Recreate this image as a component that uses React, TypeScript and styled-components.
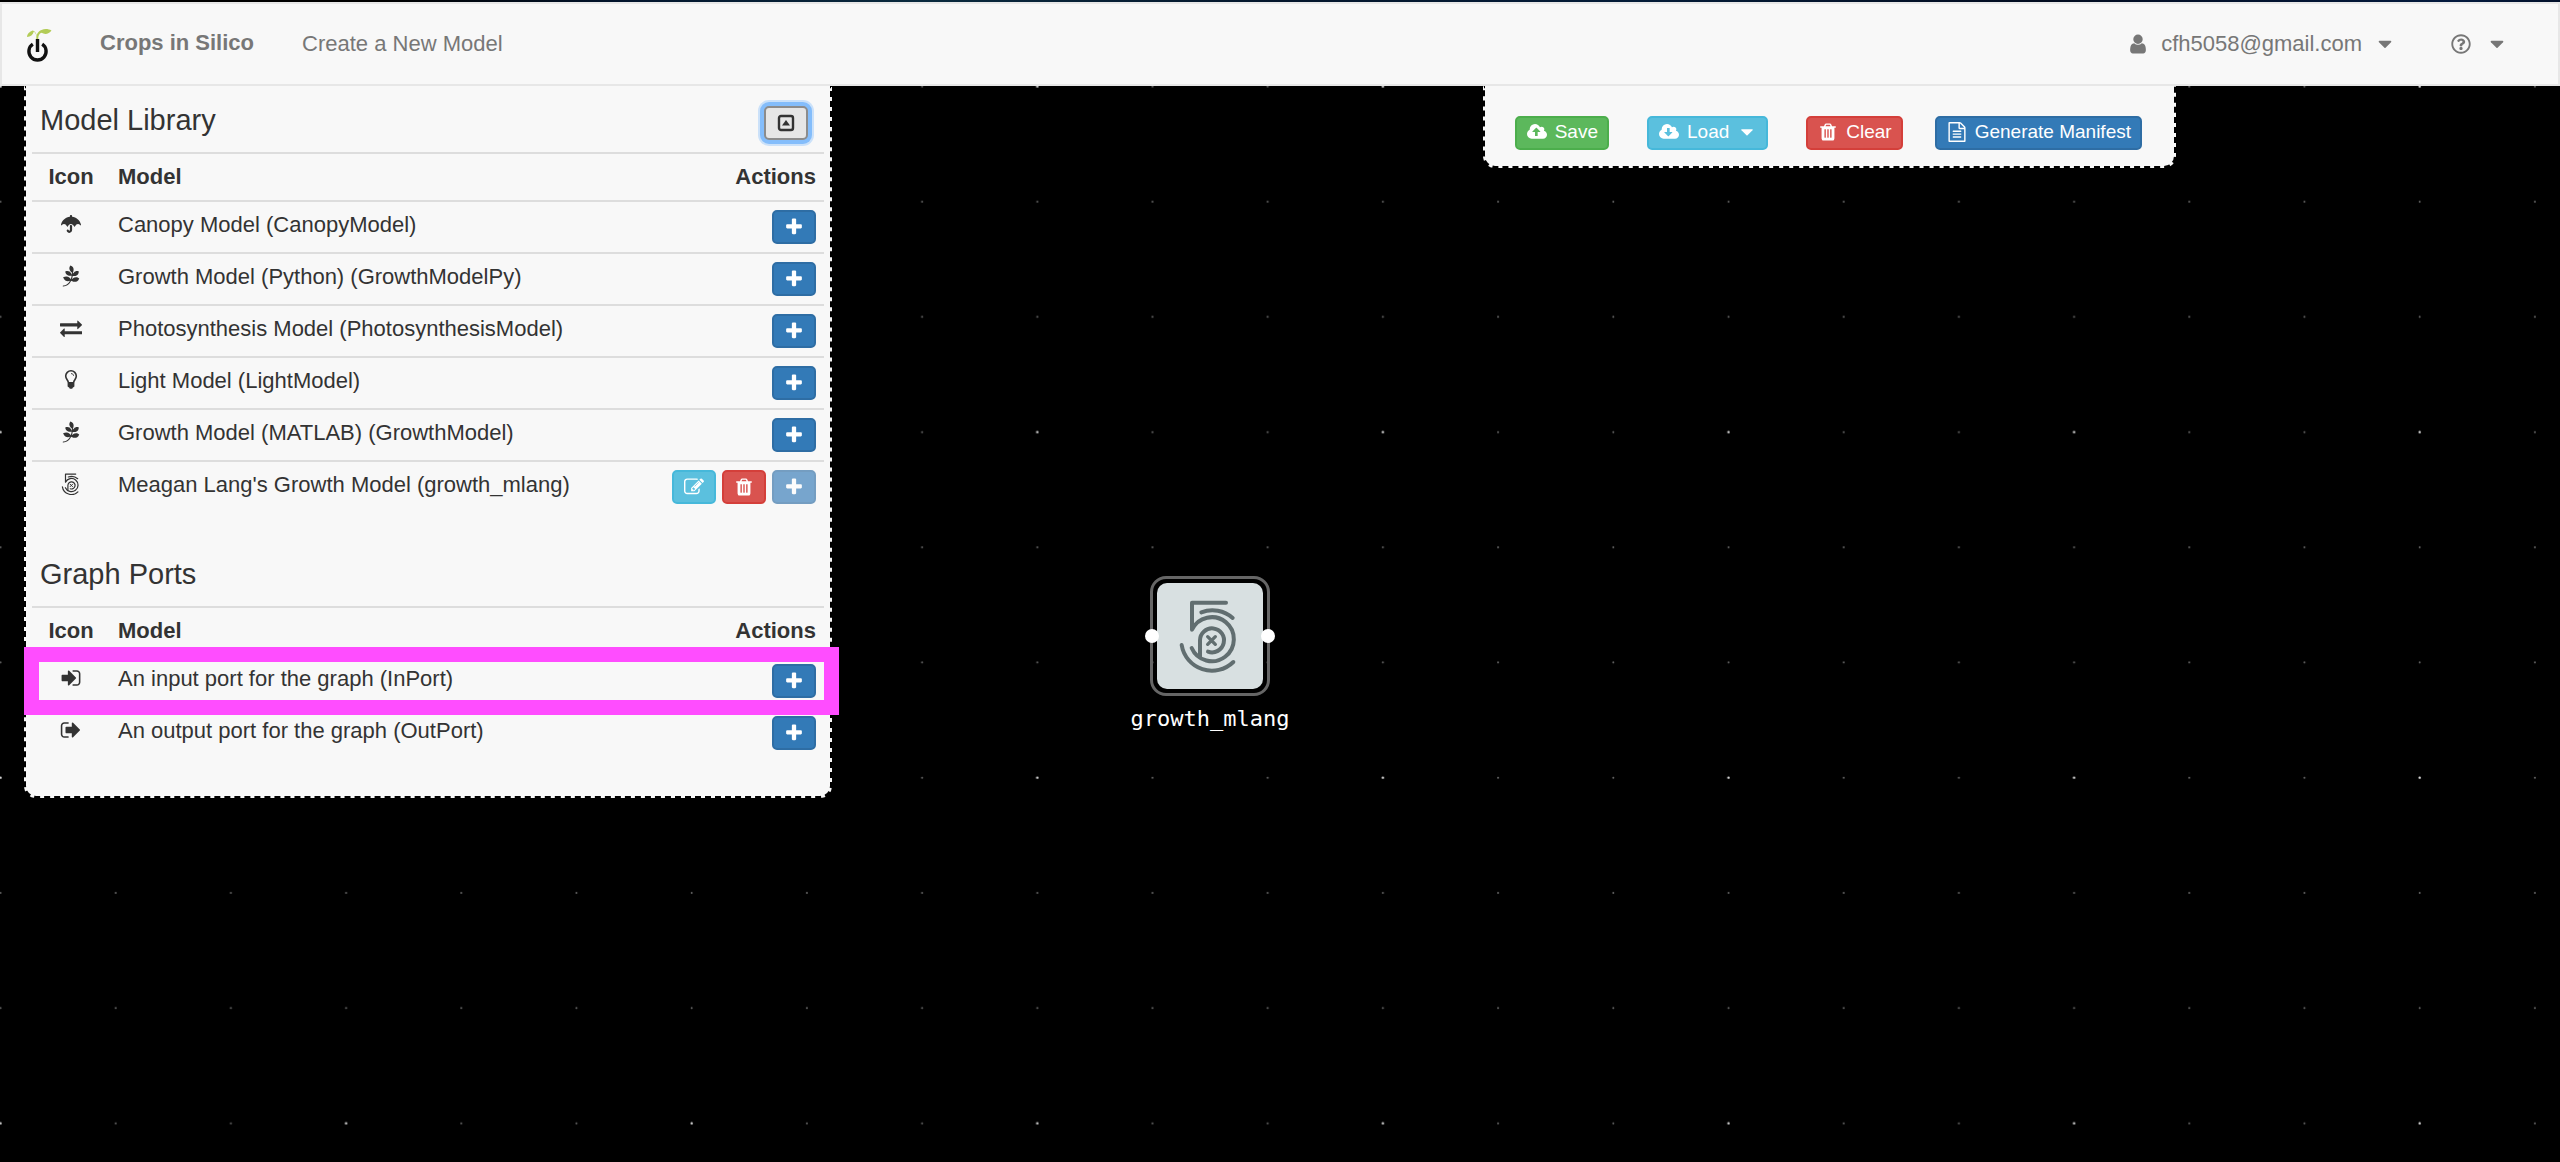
import React from "react";
import styled, { createGlobalStyle, css } from "styled-components";
import { FaPagelines, FaUmbrella, FaRegQuestionCircle } from "react-icons/fa";

const GlobalStyle = createGlobalStyle`
  *, *::before, *::after { box-sizing: border-box; }
  body {
    margin: 0;
    background: #000;
    color: #333;
    font: 22px/30px "Liberation Sans", Arial, Helvetica, sans-serif;
  }
  button { font-family: inherit; cursor: pointer; }
  svg { display: block; flex: none; }
`;

/* ---------- icons ---------- */

const CLOUD =
  "M1856 1152q0 159-112.5 271.5t-271.5 112.5h-1088q-185 0-316.5-131.5t-131.5-316.5q0-130 70-240t188-165q-2-30-2-43 0-212 150-362t362-150q156 0 285.5 87t188.5 231q71-62 166-62 106 0 181 75t75 181q0 76-41 138 130 31 213.5 135.5t83.5 238.5z";

const PATHS = {
  user: "M1536 1399q0 109-62.5 187t-150.5 78h-854q-88 0-150.5-78t-62.5-187q0-85 8.5-160.5t31.5-152 58.5-131 94-89 134.5-34.5q131 128 313 128t313-128q76 0 134.5 34.5t94 89 58.5 131 31.5 152 8.5 160.5zm-256-887q0 159-112.5 271.5t-271.5 112.5-271.5-112.5-112.5-271.5 112.5-271.5 271.5-112.5 271.5 112.5 112.5 271.5z",
  plus: "M1600 736v192q0 40-28 68t-68 28h-416v416q0 40-28 68t-68 28h-192q-40 0-68-28t-28-68v-416h-416q-40 0-68-28t-28-68v-192q0-40 28-68t68-28h416v-416q0-40 28-68t68-28h192q40 0 68 28t28 68v416h416q40 0 68 28t28 68z",
  trash:
    "M704 1376v-704q0-14-9-23t-23-9h-64q-14 0-23 9t-9 23v704q0 14 9 23t23 9h64q14 0 23-9t9-23zm256 0v-704q0-14-9-23t-23-9h-64q-14 0-23 9t-9 23v704q0 14 9 23t23 9h64q14 0 23-9t9-23zm256 0v-704q0-14-9-23t-23-9h-64q-14 0-23 9t-9 23v704q0 14 9 23t23 9h64q14 0 23-9t9-23zm-544-992h448l-48-117q-7-9-17-11h-317q-10 2-17 11zm928 32v64q0 14-9 23t-23 9h-96v948q0 83-47 143.5t-113 60.5h-832q-66 0-113-58.5t-47-141.5v-952h-96q-14 0-23-9t-9-23v-64q0-14 9-23t23-9h309l70-167q15-37 54-63t79-26h320q40 0 79 26t54 63l70 167h309q14 0 23 9t9 23z",
  caret:
    "M1408 704q0 26-19 45l-448 448q-19 19-45 19t-45-19l-448-448q-19-19-19-45t19-45 45-19h896q26 0 45 19t19 45z",
  signIn:
    "M1312 896q0 26-19 45l-544 544q-19 19-45 19t-45-19-19-45v-288h-448q-26 0-45-19t-19-45v-384q0-26 19-45t45-19h448v-288q0-26 19-45t45-19 45 19l544 544q19 19 19 45zm352-352v704q0 119-84.5 203.5t-203.5 84.5h-320q-13 0-22.5-9.5t-9.5-22.5q0-4-1-20t-.5-26.5 3-23.5 10-19.5 20.5-6.5h320q66 0 113-47t47-113v-704q0-66-47-113t-113-47h-312l-11.5-1-11.5-3-8-5.5-7-9-2-13.5q0-4-1-20t-.5-26.5 3-23.5 10-19.5 20.5-6.5h320q119 0 203.5 84.5t84.5 203.5z",
  signOut:
    "M704 1440q0 4 1 20t.5 26.5-3 23.5-10 19.5-20.5 6.5h-320q-119 0-203.5-84.5t-84.5-203.5v-704q0-119 84.5-203.5t203.5-84.5h320q13 0 22.5 9.5t9.5 22.5q0 4 1 20t.5 26.5-3 23.5-10 19.5-20.5 6.5h-320q-66 0-113 47t-47 113v704q0 66 47 113t113 47h312l11.5 1 11.5 3 8 5.5 7 9 2 13.5zm928-544q0 26-19 45l-544 544q-19 19-45 19t-45-19-19-45v-288h-448q-26 0-45-19t-19-45v-384q0-26 19-45t45-19h448v-288q0-26 19-45t45-19 45 19l544 544q19 19 19 45z",
  exchange:
    "M1792 1184v192q0 13-9.5 22.5t-22.5 9.5h-1376v192q0 13-9.5 22.5t-22.5 9.5q-12 0-24-10l-319-320q-9-9-9-22 0-14 9-23l320-320q9-9 23-9 13 0 22.5 9.5t9.5 22.5v192h1376q13 0 22.5 9.5t9.5 22.5zm0-544q0 14-9 23l-320 320q-9 9-23 9-13 0-22.5-9.5t-9.5-22.5v-192h-1376q-13 0-22.5-9.5t-9.5-22.5v-192q0-13 9.5-22.5t22.5-9.5h1376v-192q0-14 9-23t23-9q12 0 24 10l319 319q9 9 9 23z",
  upload:
    "M1216 864q0-14-9-23l-352-352q-9-9-23-9t-23 9l-351 351q-10 12-10 24 0 14 9 23t23 9h224v352q0 13 9.5 22.5t22.5 9.5h192q13 0 22.5-9.5t9.5-22.5v-352h224q13 0 22.5-9.5t9.5-22.5z" +
    CLOUD,
  download:
    "M1216 928q0-14-9-23t-23-9h-224v-352q0-13-9.5-22.5t-22.5-9.5h-192q-13 0-22.5 9.5t-9.5 22.5v352h-224q-13 0-22.5 9.5t-9.5 22.5q0 14 9 23l352 352q9 9 23 9t23-9l351-351q10-12 10-24z" +
    CLOUD,
  file: "M1596 380q28 28 48 76t20 88v1152q0 40-28 68t-68 28h-1344q-40 0-68-28t-28-68v-1600q0-40 28-68t68-28h896q40 0 88 20t76 48zm-444-244v376h376q-10-29-22-41l-313-313q-12-12-41-22zm384 1528v-1024h-416q-40 0-68-28t-28-68v-416h-768v1536h1280zm-1024-864q0-14 9-23t23-9h704q14 0 23 9t9 23v64q0 14-9 23t-23 9h-704q-14 0-23-9t-9-23v-64zm736 224q14 0 23 9t9 23v64q0 14-9 23t-23 9h-704q-14 0-23-9t-9-23v-64q0-14 9-23t23-9h704zm0 256q14 0 23 9t9 23v64q0 14-9 23t-23 9h-704q-14 0-23-9t-9-23v-64q0-14 9-23t23-9h704z",
  edit: "M888 1184l116-116-152-152-116 116v56h96v96h56zm440-720q-16-16-33 1l-350 350q-17 17-1 33t33-1l350-350q17-17 1-33zm80 594v190q0 119-84.5 203.5t-203.5 84.5h-832q-119 0-203.5-84.5t-84.5-203.5v-832q0-119 84.5-203.5t203.5-84.5h832q63 0 117 25 15 7 18 23 3 17-9 29l-49 49q-14 14-32 8-23-6-45-6h-832q-66 0-113 47t-47 113v832q0 66 47 113t113 47h832q66 0 113-47t47-113v-126q0-13 9-22l64-64q15-15 35-7t20 29zm-96-738l288 288-672 672h-288v-288zm444 132l-92 92-288-288 92-92q28-28 68-28t68 28l152 152q28 28 28 68t-28 68z",
};

type IconName = keyof typeof PATHS;

const Icon = ({ name, size = 22 }: { name: IconName; size?: number }) => {
  const wide = name === "upload" || name === "download";
  return (
    <svg
      width={size}
      height={size}
      viewBox={wide ? "-64 0 1920 1792" : "0 0 1792 1792"}
      fill="currentColor"
      fillRule={wide ? "evenodd" : "nonzero"}
      aria-hidden="true"
    >
      <path d={PATHS[name]} />
    </svg>
  );
};

const BulbIcon = () => (
  <svg width="22" height="22" viewBox="0 0 22 22" aria-hidden="true">
    <path
      d="M8.3 13.2C8.1 11 5.7 10 5.7 7.1a5.3 5.3 0 0 1 10.6 0c0 2.9-2.4 3.9-2.6 6.1"
      fill="none"
      stroke="currentColor"
      strokeWidth="1.6"
    />
    <path d="M11 4.6c1.5 0 2.6.8 2.6 2.2" fill="none" stroke="currentColor" strokeWidth=".9" />
    <path d="M7.6 13h6.8v4.6l-1.7 1.1-.5 1.1H9.8l-.5-1.1-1.7-1.1z" fill="currentColor" />
  </svg>
);

const CollapseIcon = () => (
  <svg width="18" height="18" viewBox="0 0 18 18" aria-hidden="true">
    <rect x="2" y="2" width="14" height="14" rx="2" fill="none" stroke="currentColor" strokeWidth="2.4" />
    <path d="M9 6l4 5.6H5z" fill="currentColor" />
  </svg>
);

const FiveIcon = ({ size, box }: { size: number; box: string }) => (
  <svg
    width={size}
    height={size}
    viewBox={box}
    fill="none"
    stroke="currentColor"
    strokeWidth="12"
    strokeLinecap="round"
    strokeLinejoin="round"
    aria-hidden="true"
  >
    <path d="M207 59H105V140A66 66 0 1 1 104 195" />
    <path d="M133 88A91 91 0 0 1 227 105" />
    <path d="M74 186A92 92 0 0 0 229 237" />
    <path d="M129 222V172A36 36 0 1 1 153 206" />
    <path d="M152 161L175 184M175 161L152 184" strokeWidth="10" />
  </svg>
);

const LogoIcon = () => (
  <svg width="26" height="34" viewBox="0 0 26 34" aria-hidden="true">
    <path d="M11.5 11C11 6 9 3 6.5 2.5 3 4 1 6 1 9c3.5-.5 6-2 6.8-5.5 2 1.5 2.7 4 3.700 7.5z" fill="#b3cc57" />
    <path d="M10.3 11C10.3 6 12 3.5 15.5 2c3.5-1.5 7-1 10 .5-2.5 3.5-6.5 4.300-10 2.300-2.300.8-3.300 3-3.300 6.200z" fill="#b3cc57" />
    <path d="M6.8 16.2a8.6 8.6 0 1 0 9.4 0" fill="none" stroke="#111" strokeWidth="3.4" />
    <path d="M11.5 11v13" stroke="#111" strokeWidth="3.4" />
  </svg>
);

/* ---------- page frame ---------- */

const Page = styled.div`
  display: flex;
  flex-direction: column;
  min-height: 100vh;
`;

const SpaceStrip = styled.div`
  height: 2px;
  background: linear-gradient(90deg, #000 15%, #02142c 24%, #0a2a3e 36%, #04162c 50%, #041c38 64%, #020c20 80%, #031a3e 96%, #02102a);
`;

const Navbar = styled.nav`
  display: flex;
  align-items: center;
  justify-content: space-between;
  height: 84px;
  padding: 0 50px 0 24px;
  background: #f8f8f8;
  border: 2px solid #e7e7e7;
`;

const NavGroup = styled.div<{ $gap: number }>`
  display: flex;
  align-items: center;
  gap: ${(p) => p.$gap}px;
`;

const NavLink = styled.a`
  color: #777;
  text-decoration: none;
`;

const LogoLink = styled(NavLink)`
  padding-top: 2px;
`;

const Brand = styled(NavLink)`
  padding-bottom: 2px;
  font-weight: bold;
`;

const NavMenu = styled.button<{ $gap: number }>`
  display: flex;
  align-items: center;
  gap: ${(p) => p.$gap}px;
  padding: 0;
  border: 0;
  background: none;
  color: #777;
  font-size: 22px;
  line-height: 30px;
`;

const Workspace = styled.main`
  position: relative;
  flex: 1;
  display: flex;
  align-items: flex-start;
  justify-content: space-between;
  padding: 0 15% 0 24px;
  overflow: hidden;
`;

/* ---------- graph canvas ---------- */

const Canvas = styled.div`
  position: absolute;
  inset: 0;
`;

const Node = styled.div`
  position: absolute;
  top: 490px;
  left: 1150px;
  width: 120px;
  height: 120px;
  padding: 4px;
  border: 3px solid #666;
  border-radius: 16px;
`;

const NodeFace = styled.div`
  width: 106px;
  height: 106px;
  border-radius: 10px;
  background: #d8e0e1;
  color: #616e70;
`;

const Port = styled.span<{ $side: "left" | "right" }>`
  position: absolute;
  top: 50px;
  ${(p) => p.$side}: -8px;
  width: 14px;
  height: 14px;
  border-radius: 50%;
  background: #fff;
`;

const NodeLabel = styled.span`
  position: absolute;
  top: 125px;
  left: 50%;
  transform: translateX(-50%);
  color: #fff;
  font: 22px/30px "DejaVu Sans Mono", monospace;
`;

/* ---------- panels ---------- */

const panel = css`
  position: relative;
  background: #f8f8f8;
  border: 2px dashed #000;
  border-top: 0;
  border-radius: 0 0 12px 12px;
`;

const Library = styled.aside`
  ${panel}
  width: 808px;
  padding: 4px 6px 6px;
`;

const Toolbar = styled.div`
  ${panel}
  display: flex;
  gap: 32px;
  padding: 30px 32px 16px 30px;
`;

const ToolGroup = styled.div`
  display: flex;
  gap: 38px;
`;

const SectionHead = styled.header`
  display: flex;
  align-items: flex-start;
  justify-content: space-between;
  height: 62px;
  padding: 14px 16px 0 8px;
`;

const Title = styled.h4`
  margin: 0;
  font-size: 29px;
  font-weight: 400;
  line-height: 32px;
`;

const TONES = {
  green: ["#5cb85c", "#4cae4c"],
  cyan: ["#5bc0de", "#46b8da"],
  red: ["#d9534f", "#d43f3a"],
  blue: ["#337ab7", "#2e6da4"],
};
type Tone = keyof typeof TONES;

const Button = styled.button<{ $tone: Tone }>`
  display: inline-flex;
  align-items: center;
  gap: 8px;
  height: 34px;
  padding: 0 9px 3px 10px;
  border: 2px solid ${(p) => TONES[p.$tone][1]};
  border-radius: 5px;
  background: ${(p) => TONES[p.$tone][0]};
  color: #fff;
  font-size: 19px;
  line-height: 27px;
`;

const IconButton = styled(Button)`
  justify-content: center;
  width: 44px;
  padding: 0;
  &:disabled {
    opacity: 0.65;
  }
`;

const CollapseButton = styled.button`
  display: flex;
  align-items: center;
  justify-content: center;
  width: 44px;
  height: 34px;
  margin-top: 2px;
  padding: 0;
  border: 2px solid #8c8c8c;
  border-radius: 5px;
  background: #e6e6e6;
  color: #333;
  box-shadow: 0 0 0 4px #84bdfb, 0 0 0 6px #cbe1f9;
`;

const Table = styled.table`
  width: 100%;
  margin-bottom: 32px;
  border-collapse: separate;
  border-spacing: 0;
  table-layout: fixed;
`;

const HeadCell = styled.th<{ $width?: number; $align?: string }>`
  height: 48px;
  width: ${(p) => (p.$width ? p.$width + "px" : "auto")};
  padding: 8px;
  border-top: 2px solid #ddd;
  text-align: ${(p) => p.$align || "left"};
  vertical-align: top;
`;

const Row = styled.tr<{ $raised?: boolean }>`
  position: relative;
  z-index: ${(p) => (p.$raised ? 1 : 0)};
`;

const Cell = styled.td`
  height: 52px;
  padding: 8px;
  border-top: 2px solid #ddd;
  vertical-align: top;
`;

const IconHolder = styled.span`
  display: flex;
  align-items: center;
  justify-content: center;
  height: 28px;
`;

const Actions = styled.div`
  display: flex;
  justify-content: flex-end;
  gap: 6px;
`;

const Highlight = styled.span`
  position: absolute;
  inset: -7px -15px -9px -8px;
  border: 15px solid #ff4dff;
  pointer-events: none;
`;

/* ---------- data ---------- */

type Model = { icon: React.ReactNode; label: string; custom?: boolean; highlighted?: boolean };

const MODELS: Model[] = [
  { icon: <FaUmbrella size={20} />, label: "Canopy Model (CanopyModel)" },
  { icon: <FaPagelines size={22} />, label: "Growth Model (Python) (GrowthModelPy)" },
  { icon: <Icon name="exchange" />, label: "Photosynthesis Model (PhotosynthesisModel)" },
  { icon: <BulbIcon />, label: "Light Model (LightModel)" },
  { icon: <FaPagelines size={22} />, label: "Growth Model (MATLAB) (GrowthModel)" },
  { icon: <FiveIcon size={22} box="50 48 220 220" />, label: "Meagan Lang's Growth Model (growth_mlang)", custom: true },
];

const PORTS: Model[] = [
  { icon: <Icon name="signIn" />, label: "An input port for the graph (InPort)", highlighted: true },
  { icon: <Icon name="signOut" />, label: "An output port for the graph (OutPort)" },
];

const ModelTable = ({ rows, name }: { rows: Model[]; name: string }) => (
  <Table aria-label={name}>
    <thead>
      <tr>
        <HeadCell $width={78} $align="center">Icon</HeadCell>
        <HeadCell>Model</HeadCell>
        <HeadCell $width={160} $align="right">Actions</HeadCell>
      </tr>
    </thead>
    <tbody>
      {rows.map((row) => (
        <Row key={row.label} $raised={row.highlighted}>
          <Cell>
            <IconHolder>{row.icon}</IconHolder>
          </Cell>
          <Cell>{row.label}</Cell>
          <Cell>
            <Actions>
              {row.custom && (
                <>
                  <IconButton $tone="cyan" aria-label="Edit model">
                    <Icon name="edit" size={20} />
                  </IconButton>
                  <IconButton $tone="red" aria-label="Delete model">
                    <Icon name="trash" size={20} />
                  </IconButton>
                </>
              )}
              <IconButton $tone="blue" aria-label="Add to graph" disabled={row.custom}>
                <Icon name="plus" size={20} />
              </IconButton>
            </Actions>
            {row.highlighted && <Highlight />}
          </Cell>
        </Row>
      ))}
    </tbody>
  </Table>
);

const STEP = 115.2;
const OFFSETS = [0, 1, 2];

const DotGrid = () => (
  <svg width="100%" height="100%" aria-hidden="true">
    <defs>
      <pattern id="dots" x="-57.1" y="-57.1" width={STEP * 3} height={STEP * 3} patternUnits="userSpaceOnUse">
        {OFFSETS.map((row) =>
          OFFSETS.map((col) => (
            <circle
              key={`${row}-${col}`}
              cx={STEP * (col + 0.5)}
              cy={STEP * (row + 0.5)}
              r={row + col === 0 ? 1.2 : 1}
              fill={row + col === 0 ? "#ddd" : "#666"}
            />
          ))
        )}
      </pattern>
    </defs>
    <rect width="100%" height="100%" fill="url(#dots)" />
  </svg>
);

export default function App() {
  return (
    <Page>
      <GlobalStyle />
      <SpaceStrip />
      <Navbar>
        <NavGroup $gap={48}>
          <LogoLink href="#" aria-label="Home">
            <LogoIcon />
          </LogoLink>
          <Brand href="#">Crops in Silico</Brand>
          <NavLink href="#">Create a New Model</NavLink>
        </NavGroup>
        <NavGroup $gap={55}>
          <NavMenu $gap={12} aria-haspopup="menu">
            <Icon name="user" />
            cfh5058@gmail.com
            <Icon name="caret" />
          </NavMenu>
          <NavMenu $gap={15} aria-haspopup="menu" aria-label="Help">
            <FaRegQuestionCircle size={20} />
            <Icon name="caret" />
          </NavMenu>
        </NavGroup>
      </Navbar>
      <Workspace>
        <Canvas>
          <DotGrid />
          <Node>
            <NodeFace>
              <FiveIcon size={106} box="0 0 318 318" />
            </NodeFace>
            <Port $side="left" />
            <Port $side="right" />
            <NodeLabel>growth_mlang</NodeLabel>
          </Node>
        </Canvas>
        <Library>
          <SectionHead>
            <Title>Model Library</Title>
            <CollapseButton aria-label="Collapse library">
              <CollapseIcon />
            </CollapseButton>
          </SectionHead>
          <ModelTable name="Model Library" rows={MODELS} />
          <SectionHead>
            <Title>Graph Ports</Title>
          </SectionHead>
          <ModelTable name="Graph Ports" rows={PORTS} />
        </Library>
        <Toolbar>
          <ToolGroup>
            <Button $tone="green">
              <Icon name="upload" size={20} />
              Save
            </Button>
            <Button $tone="cyan" aria-haspopup="menu">
              <Icon name="download" size={20} />
              Load
              <Icon name="caret" size={20} />
            </Button>
            <Button $tone="red">
              <Icon name="trash" size={20} />
              Clear
            </Button>
          </ToolGroup>
          <Button $tone="blue">
            <Icon name="file" size={20} />
            Generate Manifest
          </Button>
        </Toolbar>
      </Workspace>
    </Page>
  );
}
